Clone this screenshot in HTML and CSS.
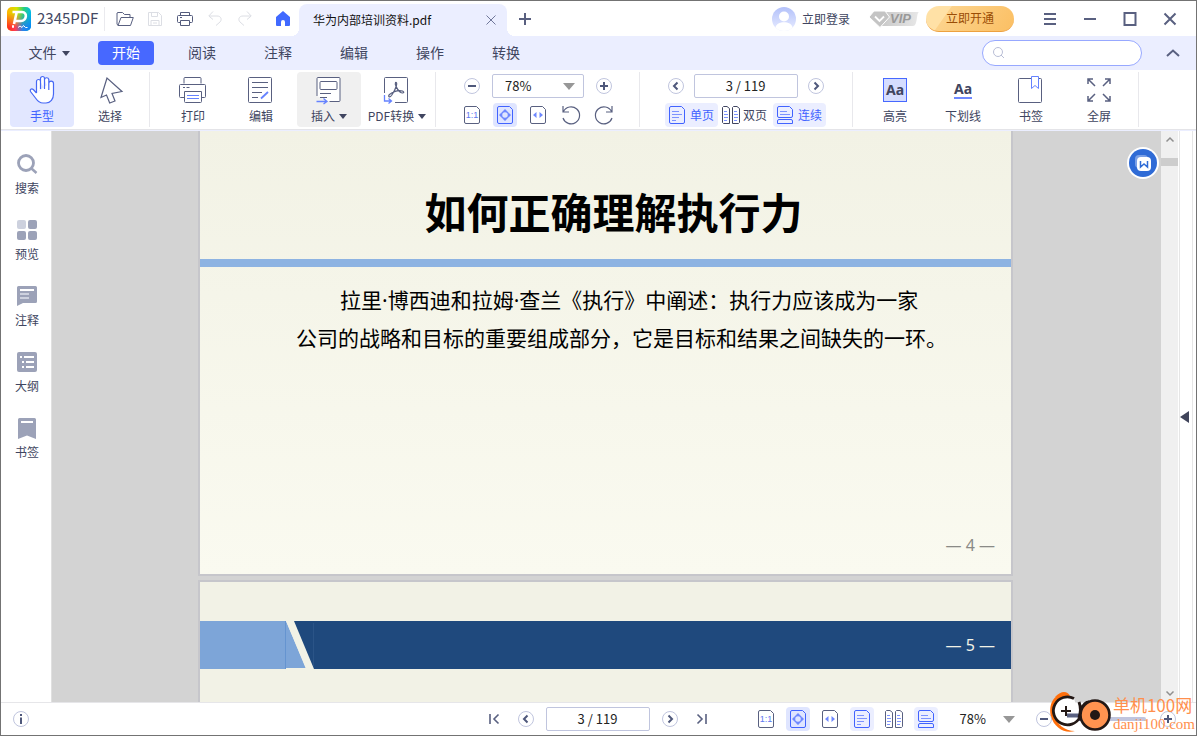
FILE: index.html
```html
<!DOCTYPE html>
<html lang="zh-CN">
<head>
<meta charset="utf-8">
<title>2345PDF</title>
<link rel="stylesheet" href="styles.css">
</head>
<body>
<svg class="defs" aria-hidden="true">
  <symbol id="frame" viewBox="0 0 16 18"><path d="M2 .5h10.5l3 3V16a1.500 1.500 0 0 1-1.500 1.500H2A1.500 1.500 0 0 1 .5 16V2A1.500 1.500 0 0 1 2 .5z" fill="none" stroke="currentColor"/></symbol>
  <symbol id="actual" viewBox="0 0 16 18"><use href="#frame" width="16" height="18"/><text class="ratio" x="8" y="12" text-anchor="middle">1:1</text></symbol>
  <symbol id="fitpage" viewBox="0 0 16 18"><use href="#frame" width="16" height="18"/><circle cx="8" cy="9" r="3.500" fill="none" stroke="#6e88ff" stroke-width="1.500"/><path d="M8 3l2.500 2.500h-5zM8 15l2.500-2.500h-5zM2 9l2.500-2.500v5zM14 9l-2.500-2.500v5z" fill="#6e88ff"/></symbol>
  <symbol id="fitwidth" viewBox="0 0 16 18"><use href="#frame" width="16" height="18"/><path d="M3 9l3.500-3v6zM13 9L9.500 6v6z" fill="#6e88ff"/></symbol>
  <symbol id="single" viewBox="0 0 16 18"><use href="#frame" width="16" height="18"/><path d="M3 5.500h7M3 8.500h10M3 11.500h7M3 14.500h4" stroke="#7d93ff"/></symbol>
  <symbol id="double" viewBox="0 0 18 18"><path d="M1.500.5H5l2.500 2v15h-6l-1-1v-15zM11.500.5H15l2.500 2v14l-1 1h-6v-16z" fill="none" stroke="currentColor"/><path d="M2 5.500h3M2 8.500h4M2 11.500h4M2 14.500h3M12 5.500h3M12 8.500h4M12 11.500h4M12 14.500h3" stroke="#7d93ff"/></symbol>
  <symbol id="continuous" viewBox="0 0 16 18"><path d="M2 .5h10.500l3 3V10a1.500 1.500 0 0 1-1.500 1.500H2A1.500 1.500 0 0 1 .5 10V2A1.500 1.500 0 0 1 2 .5zM2 13.500h12q1.500 0 1.500 1.500v2.500H.5V15q0-1.500 1.500-1.500z" fill="none" stroke="currentColor"/><path d="M3 5.500h7M3 8.500h10" stroke="#7d93ff"/></symbol>
  <symbol id="minus" viewBox="0 0 16 16"><circle cx="8" cy="8" r="7.500" fill="#fff" stroke="#c0c5de"/><path d="M4 8h8" stroke="#4f587b" stroke-width="2"/></symbol>
  <symbol id="plus" viewBox="0 0 16 16"><circle cx="8" cy="8" r="7.500" fill="#fff" stroke="#c0c5de"/><path d="M4 8h8M8 4v8" stroke="#4f587b" stroke-width="2"/></symbol>
  <symbol id="prev" viewBox="0 0 16 16"><circle cx="8" cy="8" r="7.500" fill="#fff" stroke="#c0c5de"/><path d="M9.500 4.500L6 8l3.500 3.500" fill="none" stroke="#4f587b" stroke-width="2"/></symbol>
  <symbol id="next" viewBox="0 0 16 16"><circle cx="8" cy="8" r="7.500" fill="#fff" stroke="#c0c5de"/><path d="M6.500 4.500L10 8l-3.500 3.500" fill="none" stroke="#4f587b" stroke-width="2"/></symbol>
  <symbol id="caret" viewBox="0 0 8 5"><path d="M0 0h8L4 5z" fill="currentColor"/></symbol>
</svg>

<div class="app">
  <header class="titlebar">
    <svg class="logo" viewBox="0 0 24 24" aria-hidden="true">
      <defs>
        <linearGradient id="lg" x1="0" y1="0" x2="1" y2="0"><stop offset="0" stop-color="#ffb400"/><stop offset=".4" stop-color="#d4e400"/><stop offset=".7" stop-color="#27cf7c"/><stop offset="1" stop-color="#00b9e9"/></linearGradient>
        <linearGradient id="lg2" x1="0" y1="0" x2="1" y2="0"><stop offset="0" stop-color="#ff2a18"/><stop offset=".35" stop-color="#ff3d52"/><stop offset=".65" stop-color="#2a83e8"/><stop offset="1" stop-color="#0785f5"/></linearGradient>
        <linearGradient id="fade" x1="0" y1="0" x2="0" y2="1"><stop offset=".25" stop-color="#000"/><stop offset=".85" stop-color="#fff"/></linearGradient>
        <mask id="mk"><path d="M0 0h24v24H0z" fill="url(#fade)"/></mask>
      </defs>
      <rect width="24" height="24" rx="5" fill="url(#lg)"/><rect width="24" height="24" rx="5" fill="url(#lg2)" mask="url(#mk)"/>
      <path d="M5.500 5H15c6 0 4.500 9-1 9H8.500M9.500 6L7 17M5 19.500h2" fill="none" stroke="#fff" stroke-width="2.600"/>
      <path d="M11 20.500l2-1.500 2 1.500 1.500-2 2 2h2" fill="none" stroke="#fff"/>
    </svg>
    <span class="brand">2345PDF</span>
    <div class="quick">
      <button aria-label="打开"><svg width="18" height="16" viewBox="0 0 18 16"><path d="M2 14.500L1 13V2l1-.5h4.500l2 2H14V6M2 14.500L5 6.500h12.300L14.500 14.500z" fill="none" stroke="#596080"/></svg></button>
      <button aria-label="保存" disabled><svg width="14" height="14" viewBox="0 0 14 14"><path d="M.5.500h10l3 3v10H.5zM3.500.5v4h6v-4M3 13.500v-5h8v5M5 11h4" fill="none" stroke="#dcdee4"/></svg></button>
      <button aria-label="打印"><svg width="16" height="16" viewBox="0 0 16 16"><path d="M3.500 4.500v-3h9v3M3.500 11.500h-2q-1 0-1-1v-5q0-1 1-1h13q1 0 1 1v5q0 1-1 1h-2M3.500 9.500h9v5h-9zM3 6.500h2" fill="none" stroke="#535b7c"/></svg></button>
      <button aria-label="撤销" disabled><svg width="14" height="15" viewBox="0 0 14 15"><path d="M5 .5L.8 5 5 8.500M1 5h8c4.500 0 5 4 3 6l-4 3.500" fill="none" stroke="#dcdee4"/></svg></button>
      <button aria-label="重做" disabled><svg width="14" height="15" viewBox="0 0 14 15"><path d="M9 .5L13.200 5 9 8.500M13 5H5C.5 5 0 9 2 11l4 3.500" fill="none" stroke="#dcdee4"/></svg></button>
    </div>
    <button class="home" aria-label="主页"><svg width="14" height="15" viewBox="0 0 14 15"><path d="M7 0l7 6v8q0 1-1 1H9v-4a2 2 0 0 0-4 0v4H1q-1 0-1-1V6z" fill="#4069ff"/></svg></button>
    <div class="tab"><span>华为内部培训资料.pdf</span><button aria-label="关闭标签"><svg width="10" height="10" viewBox="0 0 10 10"><path d="M.5.5l9 9M9.500.5l-9 9" stroke="#70779a"/></svg></button></div>
    <button class="newtab" aria-label="新建标签"><svg width="12" height="12" viewBox="0 0 12 12"><path d="M6 0v12M0 6h12" stroke="#596080" stroke-width="2"/></svg></button>
    <div class="account">
      <button class="login"><svg width="24" height="24" viewBox="0 0 24 24"><defs><linearGradient id="av" x1="0" y1="0" x2="0" y2="1"><stop offset="0" stop-color="#b3c1fa"/><stop offset="1" stop-color="#e8ecff"/></linearGradient></defs><circle cx="12" cy="12" r="12" fill="url(#av)"/><circle cx="12" cy="9.500" r="5" fill="#fff"/><path d="M3.500 20.500c1-7 16-7 17 0a12 12 0 0 1-17 0z" fill="#fff"/></svg>立即登录</button>
      <span class="vip"><svg viewBox="0 0 50 16" aria-hidden="true"><defs><linearGradient id="vg" x1="0" y1="0" x2="1" y2="0"><stop offset="0" stop-color="#c9c9c9"/><stop offset="1" stop-color="#e8e8e8"/></linearGradient></defs><path d="M15 1h35c-3 1-1 14-6 14H13z" fill="url(#vg)"/><path d="M5 0h11l4.500 6-9.500 10.500L0 6z" fill="#c4c4c4" stroke="#fff"/><path d="M6 5.500l4.500 4.500L15 5.500" fill="none" stroke="#fff" stroke-width="1.800"/></svg><em>VIP</em></span>
      <button class="upgrade">立即开通</button>
    </div>
    <div class="winctl">
      <button aria-label="菜单"><svg width="14" height="14" viewBox="0 0 14 14"><path d="M1 2h12M1 7h12M1 12h12" stroke="#596080" stroke-width="2"/></svg></button>
      <button aria-label="最小化"><svg width="14" height="14" viewBox="0 0 14 14"><path d="M1 7h12" stroke="#596080" stroke-width="2"/></svg></button>
      <button aria-label="最大化"><svg width="14" height="14" viewBox="0 0 14 14"><path d="M1.500 1h11v12h-11z" fill="none" stroke="#596080" stroke-width="2"/></svg></button>
      <button aria-label="关闭"><svg width="14" height="14" viewBox="0 0 14 14"><path d="M1.500 1.500l11 11M12.500 1.500l-11 11" stroke="#596080" stroke-width="2"/></svg></button>
    </div>
  </header>

  <nav class="menubar">
    <button>文件<svg class="caret"><use href="#caret"/></svg></button>
    <button class="on">开始</button>
    <button>阅读</button>
    <button>注释</button>
    <button>编辑</button>
    <button>操作</button>
    <button>转换</button>
    <label class="search"><svg width="12" height="12" viewBox="0 0 12 12"><circle cx="5" cy="5" r="4.500" fill="none" stroke="#b9bed6"/><path d="M8 8l3 3" stroke="#b9bed6"/></svg><input type="text" aria-label="搜索"></label>
    <button class="fold" aria-label="收起工具栏"><svg width="14" height="8" viewBox="0 0 14 8"><path d="M1 7l6-5.500L13 7" fill="none" stroke="#596080" stroke-width="2"/></svg></button>
  </nav>

  <div class="toolbar">
    <div class="group g-mode">
      <button class="tool active"><svg viewBox="0 0 28 28"><path d="M8.500 17V5.500a2 2 0 0 1 4 0V13M12.500 5.500V2.500a2 2 0 0 1 4 0V13M16.500 3.500a2.200 2.200 0 0 1 4.300 0V14M20.800 7.500a2.300 2.300 0 0 1 4.700 0V18c0 5-3 9-7.500 9h-3c-4 0-5.500-2-7.500-5l-5-6.500c-1-2 1-3.500 2.800-2L8.500 17" fill="#fff" stroke="#4668f5" stroke-width="1.200"/></svg>手型</button>
      <button class="tool"><svg viewBox="0 0 28 28"><path d="M11 2L5 21.500l5.500-2.500 3.200 8 5.300-2-3-7.500 10-2z" fill="#fff" stroke="#596080" stroke-width="1.200"/></svg>选择</button>
    </div>
    <div class="group g-edit">
      <button class="tool"><svg viewBox="0 0 28 28"><path d="M5 7.500v-5q0-1 1-1h15q1 0 1 1v5M5 21.500H1.500q-1 0-1-1v-11q0-1 1-1h24q1 0 1 1v11q0 1-1 1H22M5.500 15.500h17v10q0 1-1 1H6.500q-1 0-1-1z" fill="none" stroke="#596080"/><path d="M4 11.500h2M7.500 11.500h3" stroke="#596080"/><path d="M8 19.500h12M8 22.500h12" stroke="#6582ff"/></svg>打印</button>
      <button class="tool"><svg viewBox="0 0 28 28"><path d="M2.500 1.500h21q1 0 1 1v23q0 1-1 1h-21q-1 0-1-1v-23q0-1 1-1zM5 6.500h16M5 11.500h16M5 16.500h10M5 21.500h6" fill="none" stroke="#596080"/><path d="M14 22.500l7-6.500" stroke="#6582ff" stroke-width="1.800"/></svg>编辑</button>
      <button class="tool hover"><svg viewBox="0 0 28 28"><path d="M2 20V2.500q0-1 1-1h21q1 0 1 1v22q0 1-1 1H14.500" fill="#fff" stroke="#596080"/><path d="M6 5.500h15q1 0 1 1v6q0 1-1 1H6q-1 0-1-1v-6q0-1 1-1zM5 17.500h11M5 21.500h7" fill="none" stroke="#596080"/><path d="M1.500 25.500H11M8.500 22.500l3.500 3-3.500 2.500" fill="none" stroke="#6582ff" stroke-width="1.300"/></svg><span>插入<svg class="caret"><use href="#caret"/></svg></span></button>
      <button class="tool"><svg viewBox="0 0 28 28"><path d="M1.500 17V2.500q0-1 1-1h21q1 0 1 1v23q0 1-1 1H12" fill="none" stroke="#596080"/><path d="M12.500 6.500c2.500-1 1 6-4 13-2 2.500-4 1-2-1 4-3 9-4.500 13-3.500 3 1.500 0 3-2.500 1-3-2.500-5.500-8-4.500-9.500z" fill="none" stroke="#596080" stroke-width="1.200"/><path d="M1.500 19v6H8M5.500 22.500l3 2.500-3 2.500" fill="none" stroke="#6582ff" stroke-width="1.300"/></svg><span>PDF转换<svg class="caret"><use href="#caret"/></svg></span></button>
    </div>
    <div class="group stack g-zoom">
      <div class="row r-zoom">
        <button class="round" aria-label="缩小"><svg><use href="#minus"/></svg></button>
        <div class="zoomsel"><select aria-label="缩放比例"><option>78%</option></select><svg viewBox="0 0 12 7"><path d="M0 0h12L6 7z" fill="#979797"/></svg></div>
        <button class="round" aria-label="放大"><svg><use href="#plus"/></svg></button>
      </div>
      <div class="row r-fit">
        <button class="mini" aria-label="实际大小"><svg><use href="#actual"/></svg></button>
        <button class="mini on" aria-label="适合页面"><svg><use href="#fitpage"/></svg></button>
        <button class="mini" aria-label="适合宽度"><svg><use href="#fitwidth"/></svg></button>
        <button class="mini" aria-label="逆时针旋转"><svg class="rot" viewBox="0 0 20 20"><path d="M2 1v6h6M2.500 6.500A8.500 8.500 0 1 1 2 13" fill="none" stroke="#596080" stroke-width="1.200"/></svg></button>
        <button class="mini" aria-label="顺时针旋转"><svg class="rot" viewBox="0 0 20 20"><path d="M18 1v6h-6M17.500 6.500A8.500 8.500 0 1 0 18 13" fill="none" stroke="#596080" stroke-width="1.200"/></svg></button>
      </div>
    </div>
    <div class="group stack g-page">
      <div class="row r-page">
        <button class="round" aria-label="上一页"><svg><use href="#prev"/></svg></button>
        <input class="pageno" type="text" value="3 / 119" aria-label="页码">
        <button class="round" aria-label="下一页"><svg><use href="#next"/></svg></button>
      </div>
      <div class="row r-view">
        <button class="view on"><svg><use href="#single"/></svg>单页</button>
        <button class="view"><svg class="dbl"><use href="#double"/></svg>双页</button>
        <button class="view on"><svg><use href="#continuous"/></svg>连续</button>
      </div>
    </div>
    <div class="group g-mark">
      <button class="tool"><span class="aa hl">Aa</span>高亮</button>
      <button class="tool"><span class="aa"><u>Aa</u></span>下划线</button>
      <button class="tool"><svg viewBox="0 0 28 28"><path d="M2.500 2.500h21q1 0 1 1v22q0 1-1 1h-21q-1 0-1-1v-22q0-1 1-1z" fill="#fff" stroke="#596080"/><path d="M14.500.5h7v12L18 9.500l-3.500 3z" fill="#fff" stroke="#6582ff"/></svg>书签</button>
      <button class="tool"><svg viewBox="0 0 28 28"><path d="M3 8V3h5M3 3l7 7M20 3h5v5M25 3l-7 7M3 20v5h5M3 25l7-7M20 25h5v-5M25 25l-7-7" fill="none" stroke="#596080" stroke-width="1.500"/></svg>全屏</button>
    </div>
  </div>

  <main class="work">
    <aside class="side">
      <button><svg viewBox="0 0 20 20"><circle cx="9" cy="9" r="7.500" fill="none" stroke="#9ca2b8" stroke-width="2.800"/><path d="M14.500 14.500l5 4.500" stroke="#9ca2b8" stroke-width="2.500"/></svg>搜索</button>
      <button><svg viewBox="0 0 20 20"><rect width="9" height="9" rx="2" fill="#cdd1de"/><path d="M13 0h5q2 0 2 2v5q0 2-2 2h-5q-2 0-2-2V2q0-2 2-2zM2 11h5q2 0 2 2v5q0 2-2 2H2q-2 0-2-2v-5q0-2 2-2zM13 11h5q2 0 2 2v5q0 2-2 2h-5q-2 0-2-2v-5q0-2 2-2z" fill="#9ca2b8"/></svg>预览</button>
      <button><svg viewBox="0 0 20 20"><path d="M1.500 0h17Q20 0 20 1.500v14q0 1.500-1.500 1.500H6l-6 3V1.500Q0 0 1.500 0z" fill="#9ca2b8"/><path d="M3 4h14" stroke="#fff" stroke-width="2"/><path d="M3 8h9M3 12h9" stroke="#cdd1de" stroke-width="2"/></svg>注释</button>
      <button><svg viewBox="0 0 20 20"><rect width="20" height="20" rx="2" fill="#9ca2b8"/><path d="M3 5h2M7 5h10M5 10h2M9 10h8M5 15h2M9 15h8" stroke="#fff" stroke-width="2"/></svg>大纲</button>
      <button><svg viewBox="0 0 20 20"><path d="M2.500 0h15Q19 0 19 1.500V21l-9-3.500L1 21V1.500Q1 0 2.500 0z" fill="#9ca2b8"/><path d="M4 4h12" stroke="#fff" stroke-width="2"/></svg>书签</button>
    </aside>
    <div class="canvas">
      <article class="page first">
        <h1>如何正确理解执行力</h1>
        <p>拉里·博西迪和拉姆·查兰《执行》中阐述：执行力应该成为一家<br>公司的战略和目标的重要组成部分，它是目标和结果之间缺失的一环。</p>
        <footer>— 4 —</footer>
      </article>
      <article class="page second">
        <div class="band"><svg width="116" height="48" viewBox="0 0 116 48"><path d="M0 0h86l20 47H86v1H0z" fill="#7da5d8"/><path d="M85.500 0v48" stroke="#6594d0"/><path d="M86 0h8l20 48h-8z" fill="#f2f2e6"/><path d="M94 0h22v48h-2z" fill="#1f497d"/><path d="M113.500 2v44" stroke="#2b5487"/></svg><span>— 5 —</span></div>
      </article>
      <button class="float" aria-label="转Word"><svg width="32" height="32" viewBox="0 0 32 32"><circle cx="16" cy="16" r="16" fill="#fff"/><circle cx="16" cy="16" r="14" fill="#2f6bd6"/><rect x="8" y="8" width="13" height="13" rx="4" fill="#7ba0e6"/><rect x="10" y="10" width="14" height="14" rx="4" fill="#fff"/><path d="M13.500 14v6l3.500-3 3.500 3v-6" fill="none" stroke="#2f6bd6" stroke-width="1.500"/></svg></button>
    </div>
    <div class="scroll"><svg width="8" height="5" viewBox="0 0 8 5"><path d="M.5 4.500L4 1l3.500 3.500" fill="none" stroke="#8f8f8f" stroke-width="1.500"/></svg><i></i><svg class="dn" width="8" height="5" viewBox="0 0 8 5"><path d="M.5.5L4 4 7.500.5" fill="none" stroke="#8f8f8f" stroke-width="1.500"/></svg></div>
    <div class="drawer"><button aria-label="展开面板"><svg width="9" height="12" viewBox="0 0 9 12"><path d="M9 0v12L0 6z" fill="#40445a"/></svg></button></div>
  </main>

  <footer class="status">
    <button class="round info" aria-label="信息"><svg viewBox="0 0 16 16"><circle cx="8" cy="8" r="7.500" fill="#fff" stroke="#c0c5de"/><path d="M8 3v2M8 6.500V13" stroke="#4f587b" stroke-width="2"/></svg></button>
    <div class="pager">
      <button class="round" aria-label="首页"><svg viewBox="0 0 16 16"><path d="M4 3v10M12.500 3.500L8 8l4.500 4.500" fill="none" stroke="#596080" stroke-width="1.600"/></svg></button>
      <button class="round" aria-label="上一页"><svg><use href="#prev"/></svg></button>
      <input class="pageno" type="text" value="3 / 119" aria-label="当前页码">
      <button class="round" aria-label="下一页"><svg><use href="#next"/></svg></button>
      <button class="round" aria-label="末页"><svg viewBox="0 0 16 16"><path d="M12 3v10M3.500 3.500L8 8l-4.500 4.500" fill="none" stroke="#596080" stroke-width="1.600"/></svg></button>
    </div>
    <div class="modes">
      <button class="mini" aria-label="实际大小"><svg><use href="#actual"/></svg></button>
      <button class="mini on" aria-label="适合页面"><svg><use href="#fitpage"/></svg></button>
      <button class="mini" aria-label="适合宽度"><svg><use href="#fitwidth"/></svg></button>
      <button class="mini on soft" aria-label="单页"><svg><use href="#single"/></svg></button>
      <button class="mini" aria-label="双页"><svg class="dbl"><use href="#double"/></svg></button>
      <button class="mini on soft" aria-label="连续"><svg><use href="#continuous"/></svg></button>
      <button class="pct">78%<svg width="12" height="7" viewBox="0 0 12 7"><path d="M0 0h12L6 7z" fill="#979797"/></svg></button>
      <button class="round" aria-label="缩小"><svg><use href="#minus"/></svg></button>
      <input class="slider" type="range" min="0" max="100" value="40" aria-label="缩放">
      <button class="round" aria-label="放大"><svg><use href="#plus"/></svg></button>
    </div>
  </footer>

  <div class="mark">
    <svg width="64" height="44" viewBox="0 0 64 44"><path d="M21 5C6-1 0 14 3 25c3 12 14 18 24 15-11 0-18-7-20-15C4 13 11 4 21 5z" fill="#ff6f0c"/><path d="M7 6q5-5 9-5t6 4z" fill="#ff6f0c"/><path d="M26 7.500A14 14 0 1 0 32 26" fill="#fff" stroke="#231815" stroke-width="2.800"/><path d="M18 15v10M13 20h10" stroke="#231815" stroke-width="2"/><path d="M19 24.500h14" stroke="#596080" stroke-width="4"/><path d="M31 11c2 5 2 10 0 16M41 11c-4 0-6 3-8 8" fill="none" stroke="#231815" stroke-width="3"/><circle cx="47" cy="24" r="14.500" fill="#ff9350" stroke="#231815" stroke-width="2.600"/><circle cx="47" cy="24" r="5" fill="#231815"/></svg>
    <div><b>单机100网</b><span>danji100.com</span></div>
  </div>
</div>
</body>
</html>
```

FILE: styles.css
```css
* { box-sizing: border-box; }
body { margin: 0; font: 12px/16px "Noto Sans CJK SC", sans-serif; color: #404560; }
button { margin: 0; padding: 0; border: 0; background: none; font: inherit; color: inherit; display: flex; align-items: center; justify-content: center; flex: none; }
input, select { font: inherit; color: #222; }
svg { display: block; flex: none; overflow: visible; }
.defs { position: absolute; width: 0; height: 0; }
.ratio { font: 9px "Liberation Sans", sans-serif; fill: #6078f0; }
.caret { width: 8px; height: 5px; }

.app { position: relative; display: flex; flex-direction: column; height: 100vh; border: 1px solid #737373; background: #fff; overflow: hidden; }

/* Title bar */
.titlebar { display: flex; align-items: center; height: 35px; flex: none; }
.logo { width: 24px; height: 24px; margin-left: 6px; }
.brand { width: 68px; margin-left: 6px; padding-bottom: 2px; font-size: 15px; line-height: 22px; border-right: 1px solid #eaeaee; color: #434964; }
.quick { display: flex; padding-left: 5px; }
.quick button { width: 30px; height: 24px; }
.home { width: 32px; height: 24px; margin-left: 7px; }
.tab { position: relative; align-self: flex-end; display: flex; align-items: center; justify-content: space-between; width: 208px; height: 32px; padding: 0 11px 0 14px; border-radius: 8px 8px 0 0; background: #ebeeff; color: #111; }
.tab::before, .tab::after { content: ""; position: absolute; bottom: 0; width: 8px; height: 8px; }
.tab::before { right: 100%; background: radial-gradient(circle at 0 0, transparent 8px, #ebeeff 8px); }
.tab::after { left: 100%; background: radial-gradient(circle at 100% 0, transparent 8px, #ebeeff 8px); }
.newtab { width: 36px; height: 24px; }
.account { display: flex; align-items: center; margin-left: auto; }
.login { gap: 6px; margin-right: 19px; }
.vip { position: relative; width: 50px; height: 16px; margin-right: 7px; }
.vip em { position: absolute; left: 21px; top: 0; font: italic bold 13px/16px "Liberation Sans", sans-serif; color: #999; }
.upgrade { width: 88px; height: 26px; border-radius: 13px; border-bottom: 1px solid #eda13f; background: linear-gradient(125deg, #ffe1a6 24%, #fcd28a 25%, #fbbf63); color: #9a4d06; }
.winctl { display: flex; padding: 0 6px 0 16px; }
.winctl button { width: 40px; height: 24px; }

/* Menu bar */
.menubar { display: flex; align-items: center; gap: 20px; height: 34px; flex: none; padding: 0 12px 0 20px; background: #ebeeff; font-size: 14px; }
.menubar button { width: 56px; height: 24px; padding-bottom: 3px; border-radius: 4px; }
.menubar .caret { margin: 3px 0 0 5px; }
.menubar .on { margin-left: 1px; background: #4768ff; color: #fff; }
.search { display: flex; align-items: center; width: 160px; height: 26px; margin-left: auto; padding: 0 10px; border: 1px solid #97a8ff; border-radius: 13px; background: #fff; }
.search input { flex: 1; min-width: 0; border: 0; outline: 0; background: none; }
.menubar .fold { width: 22px; padding: 0; }

/* Toolbar */
.toolbar { display: flex; height: 60px; flex: none; padding-top: 2px; border-bottom: 1px solid #e4e4e8; }
.group { position: relative; display: flex; gap: 4px; height: 55px; border-right: 1px solid #e8e8ec; }
.g-mode { padding: 0 7px 0 9px; }
.g-edit { padding: 0 6px 0 11px; }
.g-zoom { padding: 2px 23px 0 24px; }
.g-page { padding: 2px 26px 0 25px; }
.g-mark { padding: 0 7px 0 10px; }
.tool { flex-direction: column; justify-content: flex-start; gap: 4px; width: 64px; height: 55px; padding-top: 4px; border-radius: 4px; white-space: nowrap; }
.tool > svg { width: 28px; height: 28px; }
.tool > span { display: flex; align-items: center; gap: 4px; }
.tool.active { background: #e2e7ff; color: #4163ff; }
.tool.hover { background: #f0f0f0; }
.tool .aa { justify-content: center; width: 28px; height: 28px; font: bold 14px/16px "Noto Sans", sans-serif; }
.tool .aa u { text-decoration: none; border-bottom: 2px solid #6e88ff; }
.tool .hl { width: 24px; height: 24px; margin: 2px 0; border: 1px solid #4768ff; background: #d5ddff; }
.stack { flex-direction: column; gap: 5px; }
.row { display: flex; align-items: center; justify-content: center; height: 24px; }
.r-zoom { gap: 12px; }
.r-fit { gap: 9px; }
.r-page { gap: 10px; }
.r-view { gap: 2px; }
.round, .round svg { width: 16px; height: 16px; }
.zoomsel { position: relative; width: 92px; height: 24px; }
.zoomsel select { appearance: none; width: 100%; height: 100%; padding: 0 12px 1px; border: 1px solid #c0c5de; border-radius: 2px; background: #fff; font-size: 13px; }
.zoomsel svg { position: absolute; right: 9px; top: 9px; width: 12px; height: 7px; }
.pageno { width: 104px; height: 24px; padding: 0 0 1px; border: 1px solid #c0c5de; border-radius: 2px; text-align: center; font-size: 13px; }
.mini { width: 24px; height: 24px; border-radius: 4px; color: #596080; }
.mini svg { width: 16px; height: 18px; }
.mini .rot { width: 20px; height: 20px; }
.mini .dbl, .view .dbl { width: 18px; }
.mini.on { background: #dfe5ff; color: #4163ff; }
.mini.soft { background: #ebeeff; }
.view { gap: 5px; height: 24px; padding: 0 4px; border-radius: 4px; }
.view svg { width: 16px; height: 18px; }
.view .dbl { margin: 0 -2px; }
.view.on { background: #ebeeff; color: #4163ff; }

/* Work area */
.work { display: flex; flex: 1; min-height: 0; border-top: 1px solid #ebeeff; }
.side { width: 51px; flex: none; border-right: 1px solid #e0e0e0; padding: 23px 0 0 2px; }
.side button { flex-direction: column; justify-content: flex-start; gap: 6px; width: 100%; height: 66px; }
.side svg { width: 20px; height: 20px; }
.canvas { position: relative; flex: 1; display: flex; flex-direction: column; align-items: center; gap: 4px; padding-right: 2px; overflow: hidden; background: #d3d3d3; }
.page { width: 100%; max-width: 815px; flex: none; border: 2px solid #c6c6cb; color: #000; font-family: "Noto Sans", "Noto Sans CJK SC", sans-serif; }
.first { border-top: 0; background: linear-gradient(#f2f2e5, #fafaf0); }
.first h1 { margin: 0; padding: 50px 0 14px 16px; border-bottom: 8px solid #8db3e2; font-size: 42px; line-height: 64px; text-align: center; }
.first p { margin: 0; padding: 14px 0 0 96px; font-size: 21px; line-height: 38px; text-indent: 44px; white-space: nowrap; }
.first footer { padding: 177px 16px 18px; text-align: right; font-size: 16px; line-height: 22px; color: #8a8a86; }
.second { height: 400px; padding-top: 39px; background: #f2f2e6; }
.band { display: flex; align-items: center; justify-content: space-between; height: 48px; padding-right: 16px; background: #1f497d; color: #f2f2e6; font-size: 16px; }
.band svg { background: #f2f2e6; }
.float { position: absolute; right: 2px; top: 16px; }
.scroll { display: flex; flex-direction: column; align-items: center; width: 17px; flex: none; padding: 6px 0; background: #f0f0f0; }
.scroll i { width: 100%; height: 8px; margin-top: 16px; background: #cdcdcd; }
.scroll .dn { margin-top: auto; }
.drawer { display: flex; align-items: center; width: 18px; flex: none; padding-left: 2px; background: linear-gradient(90deg, #fff 1px, #e6e6e6 1px 2px, #fff 2px 14px, #e6e6e6 14px 15px, #fff 15px); }

/* Status bar */
.status { display: grid; grid-template-columns: 1fr auto 1fr; align-items: center; height: 33px; flex: none; padding: 0 20px 0 12px; border-top: 1px solid #e6e6e9; }
.pager { display: flex; align-items: center; gap: 16px; margin-left: 6px; }
.pager .pageno { margin: 0 -4px; }
.modes { display: flex; align-items: center; gap: 8px; justify-content: flex-end; }
.pct { gap: 17px; margin: 0 13px 0 14px; color: #222; font-size: 13px; }
.slider { appearance: none; width: 80px; height: 4px; margin: 0 6px; border-radius: 2px; background: linear-gradient(90deg, #596080 40%, #c0c5de 40%); }
.slider::-webkit-slider-thumb { appearance: none; width: 8px; height: 12px; border-radius: 4px; background: #596080; }

/* Site mark laid over the lower right corner */
.mark { position: absolute; right: 1px; bottom: 0; display: flex; align-items: center; gap: 1px; color: #ff8f4d; pointer-events: none; }
.mark b { display: block; padding-top: 2px; font-weight: 400; font-size: 17px; line-height: 20px; }
.mark span { display: block; font: 15px/18px "Liberation Serif", serif; }
```
